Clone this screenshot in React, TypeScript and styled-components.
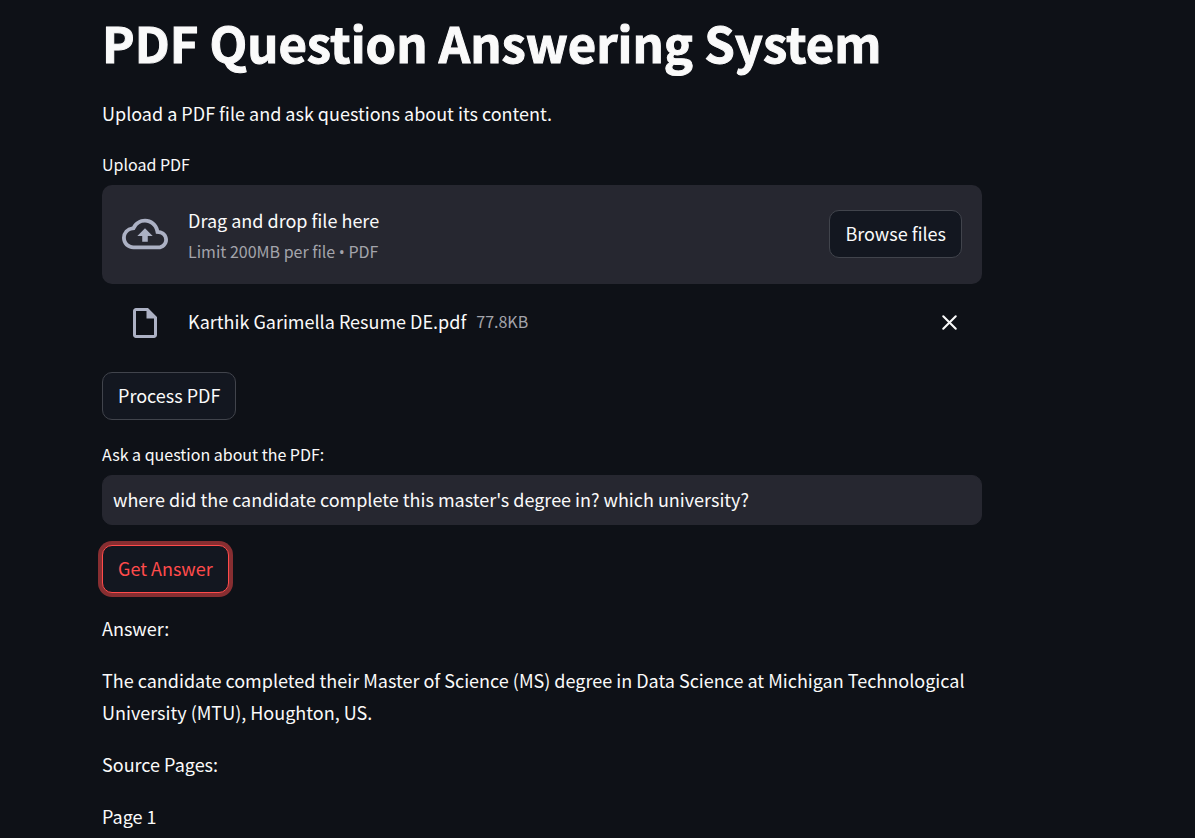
import React, { useState } from "react";
import styled, { createGlobalStyle, css } from "styled-components";

const GlobalStyle = createGlobalStyle`
  * { box-sizing: border-box; }
  html { background: #0e1117; }
  body {
    margin: 0;
    background: #0e1117;
    color: #fafafa;
    font-family: "Noto Sans CJK SC", "Noto Sans", sans-serif;
    font-size: 18px;
    line-height: 32px;
  }
  button, input { font: inherit; color: inherit; }
`;

const Page = styled.main`
  max-width: 982px;
  padding: 8px 0 4px 102px;
`;

const Title = styled.h1`
  margin: 0 0 22px;
  font-size: 49px;
  font-weight: 700;
  line-height: 67px;
  -webkit-text-stroke: 1px #fafafa;
`;

const Text = styled.p`
  margin: 0 0 20px;
`;

const FieldLabel = styled.label`
  display: block;
  margin-bottom: 6px;
  font-size: 16px;
  line-height: 30px;
`;

const Dropzone = styled.section`
  display: flex;
  align-items: center;
  gap: 20px;
  min-height: 99px;
  padding: 0 20px 1px;
  border-radius: 10px;
  background: #262730;
`;

const DropzoneText = styled.div`
  flex: 1;
  line-height: 35px;
`;

const Muted = styled.small`
  display: block;
  font-size: 16px;
  line-height: 27px;
  color: #a3a4ab;
`;

const Bullet = styled.span`
  font-family: "Open Sans", sans-serif;
`;

const Button = styled.button<{ $active?: boolean }>`
  display: block;
  height: 48px;
  padding: 0 15px 2px;
  border: 1px solid #41444c;
  border-radius: 10px;
  background: #131720;
  line-height: 32px;
  cursor: pointer;
  ${({ $active }) =>
    $active &&
    css`
      border-color: #ff4b4b;
      color: #ff4b4b;
      box-shadow: 0 0 0 4px rgba(255, 75, 75, 0.5);
    `}
`;

const FileRow = styled.div`
  display: flex;
  align-items: flex-start;
  gap: 10px;
  padding: 21px 20px 31px;
`;

const FileIconBox = styled.span`
  display: flex;
  justify-content: center;
  width: 46px;
  margin-right: 10px;
`;

const FileSize = styled(Muted)`
  flex: 1;
  line-height: 32px;
`;

const IconButton = styled.button`
  display: flex;
  align-items: center;
  height: 34px;
  padding: 0;
  border: 0;
  background: none;
  cursor: pointer;
`;

const Question = styled.div`
  padding: 19px 0 20px;
`;

const TextInput = styled.input`
  display: block;
  width: 100%;
  height: 50px;
  padding: 0 10px 2px;
  border: 1px solid #262730;
  border-radius: 10px;
  outline: none;
  background: #262730;
`;

const Result = styled.section`
  padding-top: 19px;
`;

const CloudUploadIcon = () => (
  <svg width="46" height="46" viewBox="0 0 24 24" fill="#acb1c4" aria-hidden="true">
    <path d="M19.35 10.04A7.49 7.49 0 0012 4C9.11 4 6.6 5.64 5.35 8.04A5.994 5.994 0 000 14c0 3.31 2.69 6 6 6h13c2.76 0 5-2.24 5-5 0-2.64-2.05-4.78-4.65-4.96zM19 18H6c-2.21 0-4-1.79-4-4 0-2.05 1.53-3.76 3.56-3.97l1.07-.11.5-.95A5.469 5.469 0 0112 6c2.62 0 4.88 1.86 5.39 4.43l.3 1.5 1.53.11A2.98 2.98 0 0122 15c0 1.65-1.35 3-3 3zM8 13h2.55v3h2.9v-3H16l-4-4-4 4z" />
  </svg>
);

const FileIcon = () => (
  <svg width="36" height="36" viewBox="0 0 24 24" fill="#acb1c4" aria-hidden="true">
    <path d="M14 2H6c-1.1 0-1.990.9-1.990 2L4 20c0 1.100.890 2 1.990 2H18c1.100 0 2-.9 2-2V8l-6-6zM6 20V4h7v5h5v11H6z" />
  </svg>
);

const CloseIcon = () => (
  <svg width="25" height="25" viewBox="0 0 24 24" fill="none" stroke="#fafafa" strokeWidth="2" strokeLinecap="round" aria-hidden="true">
    <path d="M6 6l12 12M18 6L6 18" />
  </svg>
);

export default function App() {
  const [question, setQuestion] = useState(
    "where did the candidate complete this master's degree in? which university?"
  );

  return (
    <>
      <GlobalStyle />
      <Page>
        <Title>PDF Question Answering System</Title>
        <Text>Upload a PDF file and ask questions about its content.</Text>

        <FieldLabel htmlFor="browse">Upload PDF</FieldLabel>
        <Dropzone>
          <CloudUploadIcon />
          <DropzoneText>
            Drag and drop file here
            <Muted>
              Limit 200MB per file <Bullet>•</Bullet> PDF
            </Muted>
          </DropzoneText>
          <Button id="browse" type="button">Browse files</Button>
        </Dropzone>
        <FileRow>
          <FileIconBox>
            <FileIcon />
          </FileIconBox>
          <span>Karthik Garimella Resume DE.pdf</span>
          <FileSize>77.8KB</FileSize>
          <IconButton type="button" aria-label="Remove file">
            <CloseIcon />
          </IconButton>
        </FileRow>

        <Button type="button">Process PDF</Button>

        <Question>
          <FieldLabel htmlFor="question">Ask a question about the PDF:</FieldLabel>
          <TextInput
            id="question"
            type="text"
            value={question}
            onChange={(e) => setQuestion(e.target.value)}
          />
        </Question>

        <Button type="button" $active>Get Answer</Button>

        <Result>
          <Text>Answer:</Text>
          <Text>
            The candidate completed their Master of Science (MS) degree in Data
            Science at Michigan Technological University (MTU), Houghton, US.
          </Text>
          <Text>Source Pages:</Text>
          <Text>Page 1</Text>
        </Result>
      </Page>
    </>
  );
}
